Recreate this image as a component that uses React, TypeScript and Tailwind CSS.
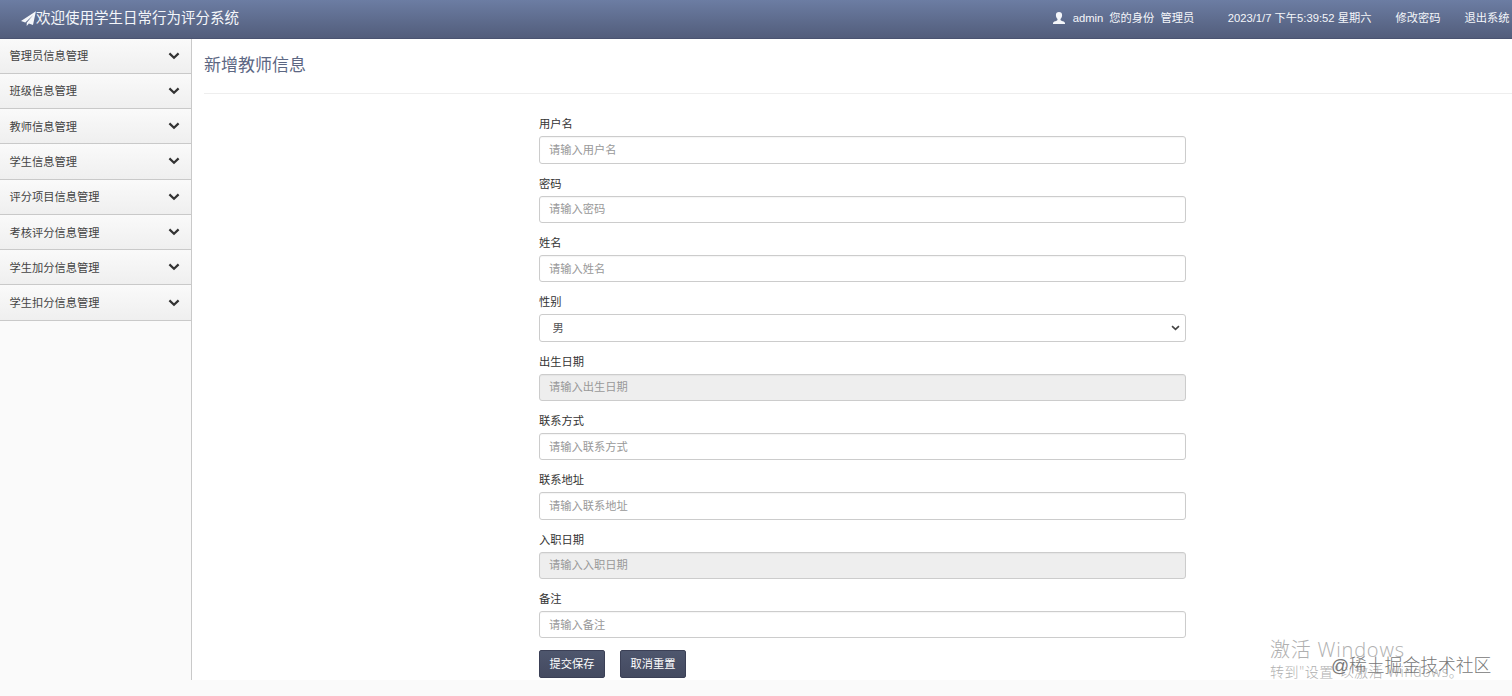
import React from "react";

const menus = [
  "管理员信息管理",
  "班级信息管理",
  "教师信息管理",
  "学生信息管理",
  "评分项目信息管理",
  "考核评分信息管理",
  "学生加分信息管理",
  "学生扣分信息管理",
];

interface IField {
  label: string;
  type?: "text" | "select";
  readOnly?: boolean;
}

const fields: IField[] = [
  { label: "用户名" },
  { label: "密码" },
  { label: "姓名" },
  { label: "性别", type: "select" },
  { label: "出生日期", readOnly: true },
  { label: "联系方式" },
  { label: "联系地址" },
  { label: "入职日期", readOnly: true },
  { label: "备注" },
];

const SendIcon = () => (
  <svg viewBox="0 0 16 16" className="h-[15px] w-[15px] shrink-0" fill="currentColor">
    <path d="M15.900.2 0 10.600l4.600 1.600L13 4.200 6.100 12.500V16l2.300-2.700 4.400 1.700z" />
  </svg>
);

const UserIcon = () => (
  <svg viewBox="0 0 12 12" className="h-3 w-3" fill="currentColor">
    <path d="M6 0C4 0 2.900 1.300 2.900 3.100c0 1.700.6 3 1.600 3.900.1.900-.1 1.300-1 1.700C2 9.300.2 9.700 0 10.900V12h12v-1.100c-.2-1.200-2-1.600-3.500-2.200-.9-.4-1.100-.8-1-1.700 1-.9 1.600-2.200 1.600-3.900C9.100 1.300 8 0 6 0z" />
  </svg>
);

const ChevronIcon = ({ className }: { className: string }) => (
  <svg viewBox="0 0 12 8" className={className} fill="none" stroke="currentColor" strokeWidth="2.2">
    <path d="M1.400 1.400 6 5.700l4.600-4.300" />
  </svg>
);

const Navbar = () => (
  <header className="flex h-[38.5px] items-center justify-between border-b border-[#4a5370] bg-linear-to-b from-[#6c7da3] to-[#525d7b] text-[#f4f6fa]">
    <div className="flex items-center pb-px pl-[21px] text-[14.500px] leading-5">
      <SendIcon />
      <span>欢迎使用学生日常行为评分系统</span>
    </div>
    <div className="flex items-center pb-px text-[11.25px] leading-4 whitespace-pre">
      <UserIcon />
      <span className="ml-[8px]">admin</span>
      <span className="ml-[6px]">您的身份</span>
      <span className="ml-[6px]">管理员</span>
      <span className="ml-[33.500px]">2023/1/7 下午5:39:52 星期六</span>
      <a className="ml-[24px]">修改密码</a>
      <a className="mr-[2.500px] ml-[24px]">退出系统</a>
    </div>
  </header>
);

const Sidebar = () => (
  <aside className="w-[191.500px] shrink-0 border-r border-[#c9c9c9] bg-[#fafafa]">
    {menus.map((name) => (
      <div
        key={name}
        className="flex h-[35.290px] items-center justify-between border-b border-[#c9c9c9] bg-linear-to-b from-[#fafafa] to-[#efefef] pr-[11px] pl-[9.500px] text-[#444]"
      >
        <span className="pt-px text-[11.25px] leading-4">{name}</span>
        <ChevronIcon className="h-[8px] w-[12px] text-[#333]" />
      </div>
    ))}
  </aside>
);

const FormField: React.FC<{ field: IField }> = ({ field }) => (
  <div className="h-[59.330px]">
    <label className="block h-5 text-[11.25px] leading-4 text-[#333]">{field.label}</label>
    {field.type === "select" ? (
      <div className="relative">
        <select className="block h-[27.500px] w-full appearance-none rounded-[3px] border border-[#ccc] bg-white pl-[12.500px] text-[11.25px] text-[#555]">
          <option>男</option>
          <option>女</option>
        </select>
        <ChevronIcon className="pointer-events-none absolute top-[11px] right-[6px] h-[6px] w-[9px] text-[#444]" />
      </div>
    ) : (
      <input
        readOnly={field.readOnly}
        placeholder={`请输入${field.label}`}
        className="block h-[27.500px] w-full rounded-[3px] border border-[#ccc] bg-white px-[9px] text-[11.25px] text-[#555] shadow-[inset_0_1px_1px_rgba(0,0,0,0.04)] placeholder:text-[#999] read-only:bg-[#eee]"
      />
    )}
  </div>
);

const FormButton = ({ children }: { children: React.ReactNode }) => (
  <button className="h-[28px] w-[66px] rounded-[2px] border border-[#3b4056] bg-linear-to-b from-[#4e566d] to-[#444a60] text-[11.25px] leading-4 text-white">
    {children}
  </button>
);

export default function App() {
  return (
    <div className="relative h-[696px] w-[1512px] overflow-hidden bg-[#fafafa] font-['Liberation_Sans','Noto_Sans_CJK_SC',sans-serif]">
      <Navbar />
      <div className="flex h-[641.500px]">
        <Sidebar />
        <main className="flex-1 bg-white pl-[12.500px]">
          <h1 className="h-[55.500px] border-b border-[#eee] pt-[15px] text-[17px] leading-6 text-[#5c6783]">
            新增教师信息
          </h1>
          <form className="ml-[335px] w-[646.500px] pt-[22.300px]">
            {fields.map((field) => (
              <FormField key={field.label} field={field} />
            ))}
            <div className="flex gap-[15px]">
              <FormButton>提交保存</FormButton>
              <FormButton>取消重置</FormButton>
            </div>
          </form>
        </main>
      </div>
      {/* desktop watermarks */}
      <div className="pointer-events-none absolute top-[637px] left-[1270px] font-['Open_Sans','Noto_Sans_CJK_SC',sans-serif] whitespace-nowrap text-[#b0b0b0]">
        <p className="text-[20px] leading-[25px] font-light tracking-[0.8px]">激活 Windows</p>
        <p className="text-[14px] leading-[20px] font-light tracking-[0.6px]">转到"设置"以激活 Windows。</p>
      </div>
      <div className="pointer-events-none absolute top-[654px] left-[1331px] text-[17.800px] leading-6 font-light whitespace-nowrap text-[#777]">
        @稀土掘金技术社区
      </div>
    </div>
  );
}
